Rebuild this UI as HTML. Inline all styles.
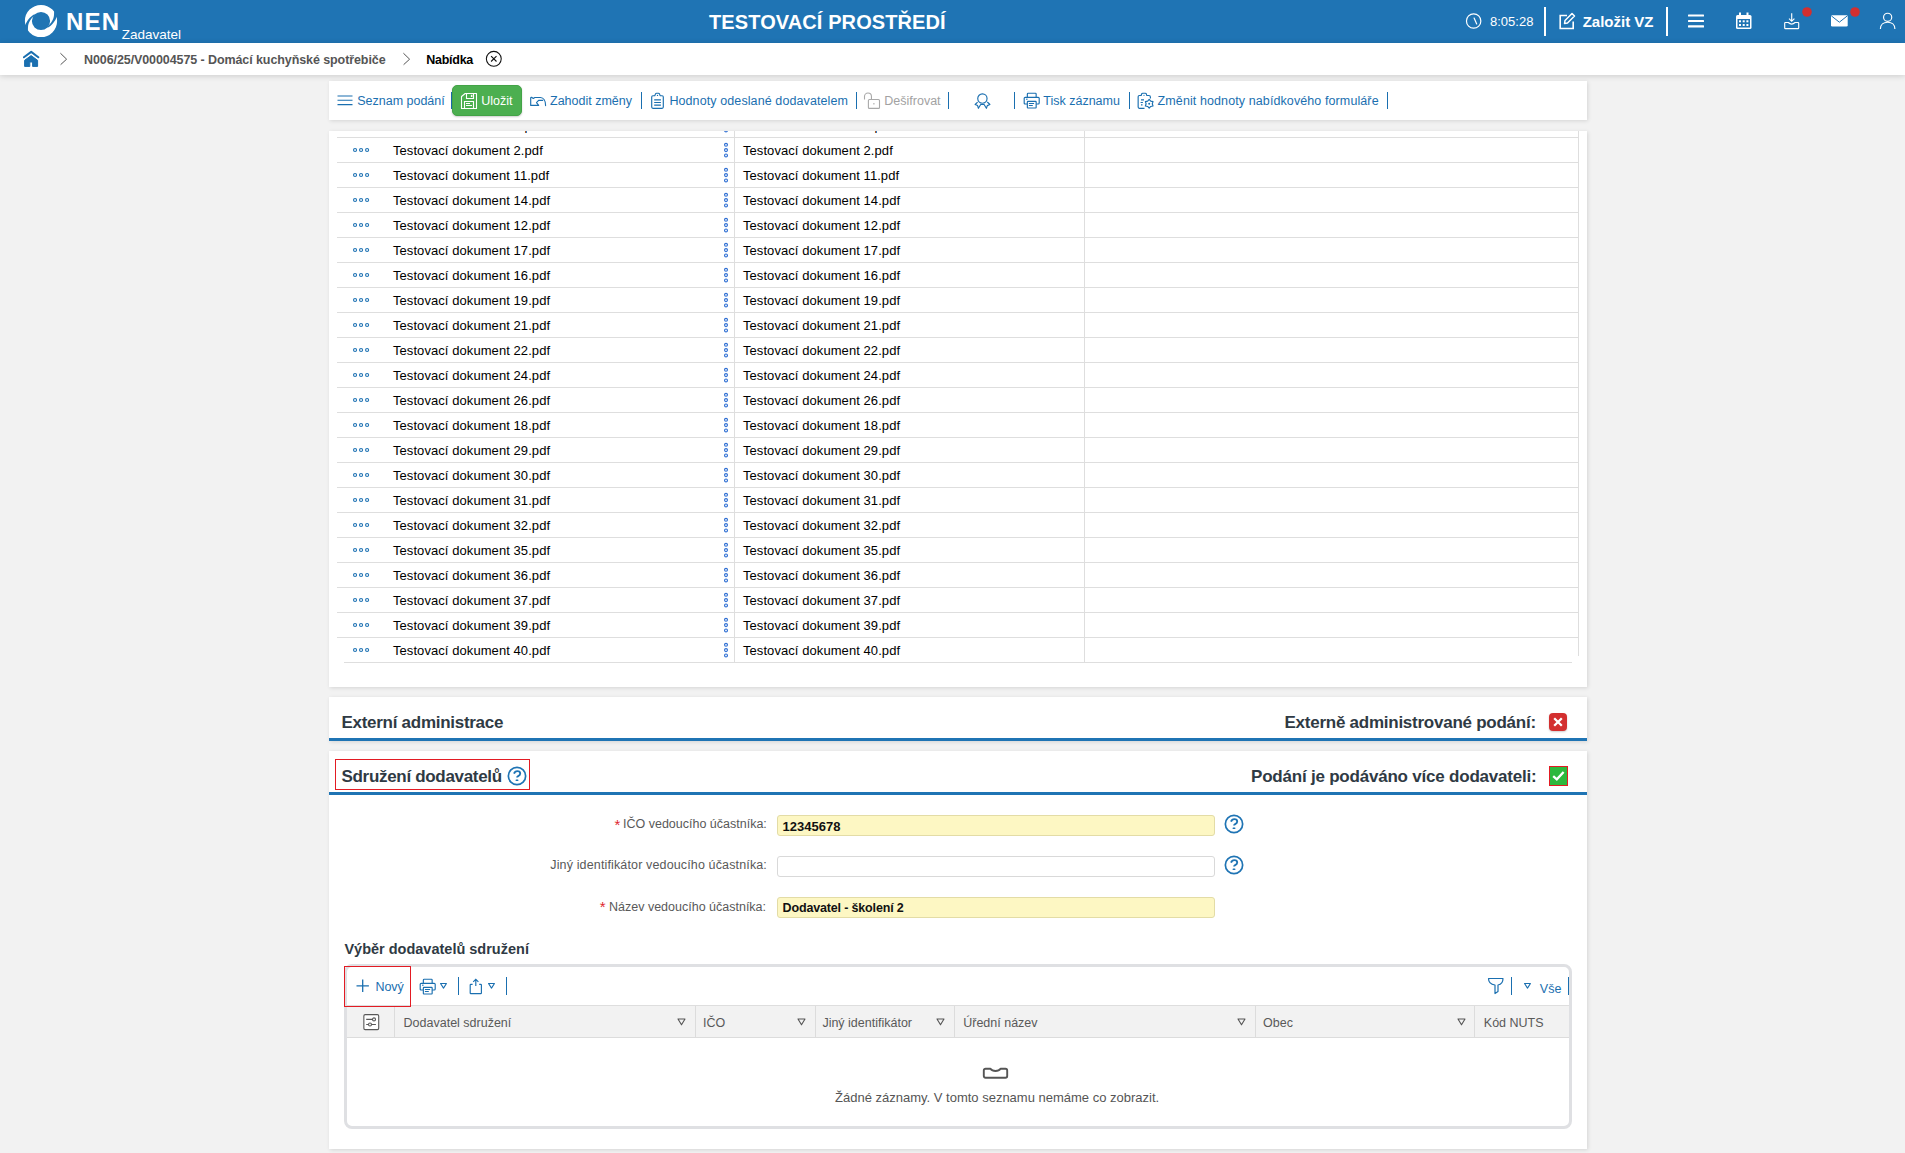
<!DOCTYPE html>
<html><head><meta charset="utf-8"><title>NEN</title>
<style>
html,body{margin:0;padding:0;}
body{width:1905px;height:1153px;overflow:hidden;position:relative;background:#f2f2f2;font-family:"Liberation Sans", sans-serif;}
.a{position:absolute;}
.t{position:absolute;line-height:1;white-space:nowrap;}
</style></head><body>
<div class="a" style="left:0px;top:0px;width:1905px;height:43px;background:#1f74b4;"></div>
<svg class="a" style="left:24px;top:4px;" width="34" height="34" viewBox="0 0 34 34"><circle cx="17" cy="17" r="12.6" fill="none" stroke="#fff" stroke-width="7"/><path d="M-0.5 22.5 L0.85 21.7 C2 19 4 14.5 9.05 10.9 L10.5 10.3 L10.5 11.8 C7 14 4.2 19 4.0 23 L3.8 28 L-0.5 28 Z" fill="#1f74b4"/><path d="M34.5 11.5 L33.15 12.3 C32 15 30 19.5 24.95 23.1 L23.5 23.7 L23.5 22.2 C27 20 29.8 15 30 11 L30.2 6 L34.5 6 Z" fill="#1f74b4"/></svg>
<div class="t" style="left:66px;top:9.78px;font-size:24px;color:#fff;font-weight:bold;letter-spacing:1.2px;">NEN</div>
<div class="t" style="left:121.8px;top:28.17px;font-size:13.5px;color:#fff;">Zadavatel</div>
<div class="t" style="left:709px;top:12.17px;font-size:20px;color:#fff;font-weight:bold;letter-spacing:0.1px;">TESTOVACÍ PROSTŘEDÍ</div>
<svg class="a" style="left:1465px;top:13px;" width="17" height="17" viewBox="0 0 17 17"><circle cx="8.65" cy="8" r="7.2" fill="none" stroke="#fff" stroke-width="1.2"/><path d="M9.1 5 L11.7 11" fill="none" stroke="#fff" stroke-width="1.2" stroke-linecap="round"/></svg>
<div class="t" style="left:1490px;top:14.50px;font-size:13px;color:#fff;">8:05:28</div>
<div class="a" style="left:1544px;top:7px;width:2px;height:29px;background:#fff;"></div>
<svg class="a" style="left:1558px;top:12px;" width="18" height="18" viewBox="0 0 18 18"><path d="M9 3.5 H2.2 V16.5 H15.2 V9.5" fill="none" stroke="#fff" stroke-width="1.6"/><path d="M6.5 11.5 L7 8.5 L14 1.5 L16.5 4 L9.5 11 Z" fill="none" stroke="#fff" stroke-width="1.5" stroke-linejoin="round"/></svg>
<div class="t" style="left:1582.7px;top:14.30px;font-size:15px;color:#fff;font-weight:bold;">Založit VZ</div>
<div class="a" style="left:1666px;top:7px;width:2px;height:29px;background:#fff;"></div>
<svg class="a" style="left:1688px;top:14px;" width="17" height="15" viewBox="0 0 17 15"><rect x="0" y="0.4" width="16" height="2.2" rx="0.5" fill="#fff"/><rect x="0" y="5.9" width="16" height="2.2" rx="0.5" fill="#fff"/><rect x="0" y="11.3" width="16" height="2.2" rx="0.5" fill="#fff"/></svg>
<svg class="a" style="left:1735px;top:12px;" width="18" height="18" viewBox="0 0 18 18"><rect x="1" y="3" width="15.5" height="14" rx="1.5" fill="#fff"/><rect x="2.5" y="7" width="12.5" height="8.5" fill="#1f74b4"/><g fill="#fff"><rect x="4" y="8.3" width="2" height="2"/><rect x="7.7" y="8.3" width="2" height="2"/><rect x="11.4" y="8.3" width="2" height="2"/><rect x="4" y="12" width="2" height="2"/><rect x="7.7" y="12" width="2" height="2"/><rect x="11.4" y="12" width="2" height="2"/></g><rect x="4" y="0.5" width="2" height="4" fill="#fff"/><rect x="11.5" y="0.5" width="2" height="4" fill="#fff"/></svg>
<svg class="a" style="left:1783px;top:12px;" width="18" height="18" viewBox="0 0 18 18"><path d="M1.7 11.2 Q1.7 10.5 2.4 10.5 H5.3 Q8.7 13.6 12.1 10.5 H15 Q15.7 10.5 15.7 11.2 V15.9 Q15.7 16.6 15 16.6 H2.4 Q1.7 16.6 1.7 15.9 Z" fill="none" stroke="#fff" stroke-width="1.15" stroke-linejoin="round"/><path d="M8.7 1.2 V9.3 M6 6.6 L8.7 9.3 L11.4 6.6" fill="none" stroke="#fff" stroke-width="1.15"/></svg>
<svg class="a" style="left:1802px;top:7px;" width="10" height="10" viewBox="0 0 10 10"><circle cx="5" cy="5" r="4.8" fill="#d32f2f"/></svg>
<svg class="a" style="left:1830px;top:14px;" width="19" height="14" viewBox="0 0 19 14"><rect x="1" y="1.3" width="16.7" height="11.2" rx="1.3" fill="#fff"/><path d="M1.4 1.9 L9.35 8.2 L17.3 1.9" fill="none" stroke="#1f74b4" stroke-width="1.0"/></svg>
<svg class="a" style="left:1850px;top:7px;" width="10" height="10" viewBox="0 0 10 10"><circle cx="5" cy="5" r="4.8" fill="#d32f2f"/></svg>
<svg class="a" style="left:1879px;top:12px;" width="17" height="18" viewBox="0 0 17 18"><circle cx="8.65" cy="5.3" r="4.1" fill="none" stroke="#fff" stroke-width="1.15"/><path d="M1.4 17 C1.4 12.6 4.5 10.2 8.65 10.2 C12.8 10.2 15.9 12.6 15.9 17" fill="none" stroke="#fff" stroke-width="1.15"/></svg>
<div class="a" style="left:0px;top:43px;width:1905px;height:32px;background:#fff;box-shadow:0 1px 6px rgba(0,0,0,0.16);"></div>
<svg class="a" style="left:23px;top:50px;" width="17" height="18" viewBox="0 0 17 18"><path d="M0.9 7.3 L8.2 1.9 L15.3 7.3" fill="none" stroke="#1a6fb0" stroke-width="2" stroke-linecap="round" stroke-linejoin="round"/><path d="M8.1 5.6 L14.6 10.3 V16.4 H9.6 V12 H6.8 V16.4 H1.6 V10.3 Z" fill="#1a6fb0" stroke="#1a6fb0" stroke-width="1" stroke-linejoin="round"/></svg>
<svg class="a" style="left:59px;top:52px;" width="9" height="14" viewBox="0 0 9 14"><path d="M1.4 1.2 L7.6 7.2 L1.6 12.7" fill="none" stroke="#555" stroke-width="1.0"/></svg>
<div class="t" style="left:84px;top:53.92px;font-size:12.5px;color:#555;font-weight:bold;letter-spacing:-0.09px;">N006/25/V00004575 - Domácí kuchyňské spotřebiče</div>
<svg class="a" style="left:402px;top:52px;" width="9" height="14" viewBox="0 0 9 14"><path d="M1.4 1.2 L7.6 7.2 L1.6 12.7" fill="none" stroke="#555" stroke-width="1.0"/></svg>
<div class="t" style="left:426.2px;top:53.92px;font-size:12.5px;color:#000;font-weight:bold;letter-spacing:-0.25px;">Nabídka</div>
<svg class="a" style="left:485px;top:50px;" width="18" height="18" viewBox="0 0 18 18"><circle cx="8.8" cy="8.8" r="7.45" fill="none" stroke="#111" stroke-width="1.05"/><path d="M6.1 6.1 L11.5 11.5 M11.5 6.1 L6.1 11.5" stroke="#111" stroke-width="1.1"/></svg>
<div class="a" style="left:329px;top:81px;width:1258px;height:39px;background:#fff;box-shadow:1px 1px 4px rgba(0,0,0,0.12);"></div>
<svg class="a" style="left:337px;top:95px;" width="16" height="11" viewBox="0 0 16 11"><g stroke="#1a6fb0" stroke-width="1.1"><path d="M0.5 1 H15.5 M0.5 5.3 H15.5 M0.5 9.6 H15.5"/></g></svg>
<div class="t" style="left:357.2px;top:94.92px;font-size:12.5px;color:#1a6fb0;">Seznam podání</div>
<div class="a" style="left:451px;top:92px;width:1.2px;height:17px;background:#1a6fb0;"></div>
<div class="a" style="left:452px;top:85px;width:70px;height:31px;background:#4caf50;border:1px solid #43a347;box-sizing:border-box;border-radius:5px;box-shadow:0 1px 2px rgba(0,0,0,0.2);"></div>
<svg class="a" style="left:460px;top:92px;" width="18" height="18" viewBox="0 0 18 18"><path d="M1.5 4.5 L5.2 1.5 H16.5 V16.5 H1.5 Z" fill="none" stroke="#fff" stroke-width="1.1" stroke-linejoin="round"/><path d="M6.5 1.5 V6.5 H13.5 V1.5" fill="none" stroke="#fff" stroke-width="1.1"/><rect x="10.9" y="2.8" width="1.5" height="2.2" fill="#fff"/><path d="M4.5 16.5 V9.5 H13.5 V16.5" fill="none" stroke="#fff" stroke-width="1.1"/><path d="M6 11.5 H10 M6 13.5 H12" stroke="#fff" stroke-width="1"/></svg>
<div class="t" style="left:481.3px;top:94.92px;font-size:12.5px;color:#fff;">Uložit</div>
<svg class="a" style="left:529px;top:95px;" width="18" height="12" viewBox="0 0 18 12"><path d="M1.7 10.3 V3.2 Q1.7 2.2 2.6 2.3 L4.3 3.4 L5.8 2.5 H11.4 C14.6 2.5 16.6 6 16.6 10.6" fill="none" stroke="#1a6fb0" stroke-width="1.15" stroke-linejoin="round" stroke-linecap="round"/><path d="M1.7 10.3 H9.7 L7.5 7.6 L9.6 5.4 H14.2" fill="none" stroke="#1a6fb0" stroke-width="1.15" stroke-linejoin="round"/></svg>
<div class="t" style="left:550px;top:94.92px;font-size:12.5px;color:#1a6fb0;">Zahodit změny</div>
<div class="a" style="left:640.5px;top:92px;width:1.2px;height:17px;background:#1a6fb0;"></div>
<svg class="a" style="left:650px;top:92px;" width="15" height="18" viewBox="0 0 15 18"><path d="M4.8 3.7 H2.9 Q1.7 3.7 1.7 4.9 V15.1 Q1.7 16.3 2.9 16.3 H12.1 Q13.3 16.3 13.3 15.1 V4.9 Q13.3 3.7 12.1 3.7 H10.1 L9.6 2.1 Q9.3 1.2 8.4 1.2 H6.6 Q5.7 1.2 5.4 2.1 Z" fill="none" stroke="#1a6fb0" stroke-width="1.15" stroke-linejoin="round"/><circle cx="7.5" cy="3.4" r="0.7" fill="#1a6fb0"/><path d="M4.2 7.9 H10.9 M4.2 10.5 H10.9 M4.2 13.1 H10.9" stroke="#1a6fb0" stroke-width="1.1"/></svg>
<div class="t" style="left:669.4px;top:94.92px;font-size:12.5px;color:#1a6fb0;letter-spacing:0.1px;">Hodnoty odeslané dodavatelem</div>
<div class="a" style="left:855.5px;top:92px;width:1.2px;height:17px;background:#1a6fb0;"></div>
<svg class="a" style="left:863px;top:92px;" width="18" height="18" viewBox="0 0 18 18"><path d="M1.5 7.5 V4.5 A3.47 3.47 0 0 1 8.45 4.5 V7.45" fill="none" stroke="#a9a9a9" stroke-width="1.1"/><rect x="5.4" y="7.45" width="11.1" height="8.95" rx="1" fill="none" stroke="#a9a9a9" stroke-width="1.1"/><path d="M10.9 11 V12.5" stroke="#a9a9a9" stroke-width="1.1"/></svg>
<div class="t" style="left:884.3px;top:94.92px;font-size:12.5px;color:#a2a2a2;">Dešifrovat</div>
<div class="a" style="left:948px;top:92px;width:1.2px;height:17px;background:#1a6fb0;"></div>
<svg class="a" style="left:974px;top:92px;" width="17" height="18" viewBox="0 0 17 18"><circle cx="8.4" cy="6.55" r="4.65" fill="none" stroke="#1a6fb0" stroke-width="1.15"/><path d="M3.6 10.1 L1.15 12.5 L3.6 13.6 L4.4 16.3 L6.7 12.5 H10.1 L12.4 16.3 L13.3 13.6 L15.9 12.5 L13.3 10" fill="none" stroke="#1a6fb0" stroke-width="1.15" stroke-linejoin="round"/></svg>
<div class="a" style="left:1014px;top:92px;width:1.2px;height:17px;background:#1a6fb0;"></div>
<svg class="a" style="left:1022.8px;top:92.25px;" width="18" height="18" viewBox="0 0 18 18"><g transform="translate(0.6 0.6)" fill="none" stroke="#1a6fb0" stroke-width="1.15"><path d="M3.75 4.3 V1.4 Q3.75 0.6 4.55 0.6 H11.75 Q12.55 0.6 12.55 1.4 V4.3"/><path d="M3.75 11.4 H1.6 Q0.6 11.4 0.6 10.4 V5.7 Q0.6 4.7 1.6 4.7 H14.6 Q15.6 4.7 15.6 5.7 V10.4 Q15.6 11.4 14.6 11.4 H12.55"/><rect x="3.75" y="8.8" width="8.8" height="6.6" rx="0.5"/><path d="M5.3 10.9 H10.5 M5.3 12.9 H9.2 M2.4 6.6 H4" stroke-width="1"/></g></svg>
<div class="t" style="left:1043.3px;top:94.92px;font-size:12.5px;color:#1a6fb0;">Tisk záznamu</div>
<div class="a" style="left:1128.5px;top:92px;width:1.2px;height:17px;background:#1a6fb0;"></div>
<svg class="a" style="left:1136px;top:92px;" width="19" height="18" viewBox="0 0 19 18"><path d="M8.5 16.3 H3.3 Q2.15 16.3 2.15 15.1 V4.7 Q2.15 3.5 3.3 3.5 H5.2 L5.6 2 Q5.9 1.2 6.8 1.2 H9.2 Q10.1 1.2 10.4 2 L10.7 3.5 H12.9 Q14.4 3.5 14.4 5 V6.6" fill="none" stroke="#1a6fb0" stroke-width="1.15" stroke-linejoin="round"/><circle cx="8" cy="3.3" r="0.6" fill="#1a6fb0"/><path d="M5 7.9 H8 M4.6 10.5 H6.9 M5 12.9 H6.5" stroke="#1a6fb0" stroke-width="1.1"/><path d="M13.20 7.40 L14.75 9.12 L17.01 9.60 L16.30 11.80 L17.01 14.00 L14.75 14.48 L13.20 16.20 L11.65 14.48 L9.39 14.00 L10.10 11.80 L9.39 9.60 L11.65 9.12 Z" fill="none" stroke="#1a6fb0" stroke-width="1.15" stroke-linejoin="round"/><circle cx="13.2" cy="11.8" r="1" fill="#1a6fb0"/></svg>
<div class="t" style="left:1157.6px;top:94.92px;font-size:12.5px;color:#1a6fb0;letter-spacing:0.1px;">Změnit hodnoty nabídkového formuláře</div>
<div class="a" style="left:1386.5px;top:92px;width:1.2px;height:17px;background:#1a6fb0;"></div>
<div class="a" style="left:329px;top:131px;width:1258px;height:556px;background:#fff;box-shadow:1px 1px 4px rgba(0,0,0,0.12);"></div>
<div class="a" style="left:329px;top:131px;width:1258px;height:556px;overflow:hidden;">
<div class="a" style="left:8px;top:6px;width:1241px;height:1px;background:#dedede;"></div>
<svg class="a" style="left:22px;top:-10px;" width="20" height="8" viewBox="0 0 20 8"><g fill="none" stroke="#1f73b4" stroke-width="1.15"><circle cx="4.05" cy="4" r="1.5"/><circle cx="10.05" cy="4" r="1.5"/><circle cx="16.1" cy="4" r="1.5"/></g></svg>
<svg class="a" style="left:393px;top:-16px;" width="8" height="20" viewBox="0 0 8 20"><g fill="none" stroke="#2f6fd3" stroke-width="1.15"><circle cx="4" cy="4.8" r="1.45"/><circle cx="4" cy="10.1" r="1.45"/><circle cx="4" cy="15.4" r="1.45"/></g></svg>
<div class="t" style="left:64px;top:-12.10px;font-size:13px;color:#000;letter-spacing:0.07px;">Testovací dokument 1.pdf</div>
<div class="t" style="left:414px;top:-12.10px;font-size:13px;color:#000;letter-spacing:0.07px;">Testovací dokument 1.pdf</div>
<div class="a" style="left:8px;top:31px;width:1241px;height:1px;background:#dedede;"></div>
<svg class="a" style="left:22px;top:15px;" width="20" height="8" viewBox="0 0 20 8"><g fill="none" stroke="#1f73b4" stroke-width="1.15"><circle cx="4.05" cy="4" r="1.5"/><circle cx="10.05" cy="4" r="1.5"/><circle cx="16.1" cy="4" r="1.5"/></g></svg>
<svg class="a" style="left:393px;top:9px;" width="8" height="20" viewBox="0 0 8 20"><g fill="none" stroke="#2f6fd3" stroke-width="1.15"><circle cx="4" cy="4.8" r="1.45"/><circle cx="4" cy="10.1" r="1.45"/><circle cx="4" cy="15.4" r="1.45"/></g></svg>
<div class="t" style="left:64px;top:12.90px;font-size:13px;color:#000;letter-spacing:0.07px;">Testovací dokument 2.pdf</div>
<div class="t" style="left:414px;top:12.90px;font-size:13px;color:#000;letter-spacing:0.07px;">Testovací dokument 2.pdf</div>
<div class="a" style="left:8px;top:56px;width:1241px;height:1px;background:#dedede;"></div>
<svg class="a" style="left:22px;top:40px;" width="20" height="8" viewBox="0 0 20 8"><g fill="none" stroke="#1f73b4" stroke-width="1.15"><circle cx="4.05" cy="4" r="1.5"/><circle cx="10.05" cy="4" r="1.5"/><circle cx="16.1" cy="4" r="1.5"/></g></svg>
<svg class="a" style="left:393px;top:34px;" width="8" height="20" viewBox="0 0 8 20"><g fill="none" stroke="#2f6fd3" stroke-width="1.15"><circle cx="4" cy="4.8" r="1.45"/><circle cx="4" cy="10.1" r="1.45"/><circle cx="4" cy="15.4" r="1.45"/></g></svg>
<div class="t" style="left:64px;top:37.90px;font-size:13px;color:#000;letter-spacing:0.07px;">Testovací dokument 11.pdf</div>
<div class="t" style="left:414px;top:37.90px;font-size:13px;color:#000;letter-spacing:0.07px;">Testovací dokument 11.pdf</div>
<div class="a" style="left:8px;top:81px;width:1241px;height:1px;background:#dedede;"></div>
<svg class="a" style="left:22px;top:65px;" width="20" height="8" viewBox="0 0 20 8"><g fill="none" stroke="#1f73b4" stroke-width="1.15"><circle cx="4.05" cy="4" r="1.5"/><circle cx="10.05" cy="4" r="1.5"/><circle cx="16.1" cy="4" r="1.5"/></g></svg>
<svg class="a" style="left:393px;top:59px;" width="8" height="20" viewBox="0 0 8 20"><g fill="none" stroke="#2f6fd3" stroke-width="1.15"><circle cx="4" cy="4.8" r="1.45"/><circle cx="4" cy="10.1" r="1.45"/><circle cx="4" cy="15.4" r="1.45"/></g></svg>
<div class="t" style="left:64px;top:62.90px;font-size:13px;color:#000;letter-spacing:0.07px;">Testovací dokument 14.pdf</div>
<div class="t" style="left:414px;top:62.90px;font-size:13px;color:#000;letter-spacing:0.07px;">Testovací dokument 14.pdf</div>
<div class="a" style="left:8px;top:106px;width:1241px;height:1px;background:#dedede;"></div>
<svg class="a" style="left:22px;top:90px;" width="20" height="8" viewBox="0 0 20 8"><g fill="none" stroke="#1f73b4" stroke-width="1.15"><circle cx="4.05" cy="4" r="1.5"/><circle cx="10.05" cy="4" r="1.5"/><circle cx="16.1" cy="4" r="1.5"/></g></svg>
<svg class="a" style="left:393px;top:84px;" width="8" height="20" viewBox="0 0 8 20"><g fill="none" stroke="#2f6fd3" stroke-width="1.15"><circle cx="4" cy="4.8" r="1.45"/><circle cx="4" cy="10.1" r="1.45"/><circle cx="4" cy="15.4" r="1.45"/></g></svg>
<div class="t" style="left:64px;top:87.90px;font-size:13px;color:#000;letter-spacing:0.07px;">Testovací dokument 12.pdf</div>
<div class="t" style="left:414px;top:87.90px;font-size:13px;color:#000;letter-spacing:0.07px;">Testovací dokument 12.pdf</div>
<div class="a" style="left:8px;top:131px;width:1241px;height:1px;background:#dedede;"></div>
<svg class="a" style="left:22px;top:115px;" width="20" height="8" viewBox="0 0 20 8"><g fill="none" stroke="#1f73b4" stroke-width="1.15"><circle cx="4.05" cy="4" r="1.5"/><circle cx="10.05" cy="4" r="1.5"/><circle cx="16.1" cy="4" r="1.5"/></g></svg>
<svg class="a" style="left:393px;top:109px;" width="8" height="20" viewBox="0 0 8 20"><g fill="none" stroke="#2f6fd3" stroke-width="1.15"><circle cx="4" cy="4.8" r="1.45"/><circle cx="4" cy="10.1" r="1.45"/><circle cx="4" cy="15.4" r="1.45"/></g></svg>
<div class="t" style="left:64px;top:112.90px;font-size:13px;color:#000;letter-spacing:0.07px;">Testovací dokument 17.pdf</div>
<div class="t" style="left:414px;top:112.90px;font-size:13px;color:#000;letter-spacing:0.07px;">Testovací dokument 17.pdf</div>
<div class="a" style="left:8px;top:156px;width:1241px;height:1px;background:#dedede;"></div>
<svg class="a" style="left:22px;top:140px;" width="20" height="8" viewBox="0 0 20 8"><g fill="none" stroke="#1f73b4" stroke-width="1.15"><circle cx="4.05" cy="4" r="1.5"/><circle cx="10.05" cy="4" r="1.5"/><circle cx="16.1" cy="4" r="1.5"/></g></svg>
<svg class="a" style="left:393px;top:134px;" width="8" height="20" viewBox="0 0 8 20"><g fill="none" stroke="#2f6fd3" stroke-width="1.15"><circle cx="4" cy="4.8" r="1.45"/><circle cx="4" cy="10.1" r="1.45"/><circle cx="4" cy="15.4" r="1.45"/></g></svg>
<div class="t" style="left:64px;top:137.90px;font-size:13px;color:#000;letter-spacing:0.07px;">Testovací dokument 16.pdf</div>
<div class="t" style="left:414px;top:137.90px;font-size:13px;color:#000;letter-spacing:0.07px;">Testovací dokument 16.pdf</div>
<div class="a" style="left:8px;top:181px;width:1241px;height:1px;background:#dedede;"></div>
<svg class="a" style="left:22px;top:165px;" width="20" height="8" viewBox="0 0 20 8"><g fill="none" stroke="#1f73b4" stroke-width="1.15"><circle cx="4.05" cy="4" r="1.5"/><circle cx="10.05" cy="4" r="1.5"/><circle cx="16.1" cy="4" r="1.5"/></g></svg>
<svg class="a" style="left:393px;top:159px;" width="8" height="20" viewBox="0 0 8 20"><g fill="none" stroke="#2f6fd3" stroke-width="1.15"><circle cx="4" cy="4.8" r="1.45"/><circle cx="4" cy="10.1" r="1.45"/><circle cx="4" cy="15.4" r="1.45"/></g></svg>
<div class="t" style="left:64px;top:162.90px;font-size:13px;color:#000;letter-spacing:0.07px;">Testovací dokument 19.pdf</div>
<div class="t" style="left:414px;top:162.90px;font-size:13px;color:#000;letter-spacing:0.07px;">Testovací dokument 19.pdf</div>
<div class="a" style="left:8px;top:206px;width:1241px;height:1px;background:#dedede;"></div>
<svg class="a" style="left:22px;top:190px;" width="20" height="8" viewBox="0 0 20 8"><g fill="none" stroke="#1f73b4" stroke-width="1.15"><circle cx="4.05" cy="4" r="1.5"/><circle cx="10.05" cy="4" r="1.5"/><circle cx="16.1" cy="4" r="1.5"/></g></svg>
<svg class="a" style="left:393px;top:184px;" width="8" height="20" viewBox="0 0 8 20"><g fill="none" stroke="#2f6fd3" stroke-width="1.15"><circle cx="4" cy="4.8" r="1.45"/><circle cx="4" cy="10.1" r="1.45"/><circle cx="4" cy="15.4" r="1.45"/></g></svg>
<div class="t" style="left:64px;top:187.90px;font-size:13px;color:#000;letter-spacing:0.07px;">Testovací dokument 21.pdf</div>
<div class="t" style="left:414px;top:187.90px;font-size:13px;color:#000;letter-spacing:0.07px;">Testovací dokument 21.pdf</div>
<div class="a" style="left:8px;top:231px;width:1241px;height:1px;background:#dedede;"></div>
<svg class="a" style="left:22px;top:215px;" width="20" height="8" viewBox="0 0 20 8"><g fill="none" stroke="#1f73b4" stroke-width="1.15"><circle cx="4.05" cy="4" r="1.5"/><circle cx="10.05" cy="4" r="1.5"/><circle cx="16.1" cy="4" r="1.5"/></g></svg>
<svg class="a" style="left:393px;top:209px;" width="8" height="20" viewBox="0 0 8 20"><g fill="none" stroke="#2f6fd3" stroke-width="1.15"><circle cx="4" cy="4.8" r="1.45"/><circle cx="4" cy="10.1" r="1.45"/><circle cx="4" cy="15.4" r="1.45"/></g></svg>
<div class="t" style="left:64px;top:212.90px;font-size:13px;color:#000;letter-spacing:0.07px;">Testovací dokument 22.pdf</div>
<div class="t" style="left:414px;top:212.90px;font-size:13px;color:#000;letter-spacing:0.07px;">Testovací dokument 22.pdf</div>
<div class="a" style="left:8px;top:256px;width:1241px;height:1px;background:#dedede;"></div>
<svg class="a" style="left:22px;top:240px;" width="20" height="8" viewBox="0 0 20 8"><g fill="none" stroke="#1f73b4" stroke-width="1.15"><circle cx="4.05" cy="4" r="1.5"/><circle cx="10.05" cy="4" r="1.5"/><circle cx="16.1" cy="4" r="1.5"/></g></svg>
<svg class="a" style="left:393px;top:234px;" width="8" height="20" viewBox="0 0 8 20"><g fill="none" stroke="#2f6fd3" stroke-width="1.15"><circle cx="4" cy="4.8" r="1.45"/><circle cx="4" cy="10.1" r="1.45"/><circle cx="4" cy="15.4" r="1.45"/></g></svg>
<div class="t" style="left:64px;top:237.90px;font-size:13px;color:#000;letter-spacing:0.07px;">Testovací dokument 24.pdf</div>
<div class="t" style="left:414px;top:237.90px;font-size:13px;color:#000;letter-spacing:0.07px;">Testovací dokument 24.pdf</div>
<div class="a" style="left:8px;top:281px;width:1241px;height:1px;background:#dedede;"></div>
<svg class="a" style="left:22px;top:265px;" width="20" height="8" viewBox="0 0 20 8"><g fill="none" stroke="#1f73b4" stroke-width="1.15"><circle cx="4.05" cy="4" r="1.5"/><circle cx="10.05" cy="4" r="1.5"/><circle cx="16.1" cy="4" r="1.5"/></g></svg>
<svg class="a" style="left:393px;top:259px;" width="8" height="20" viewBox="0 0 8 20"><g fill="none" stroke="#2f6fd3" stroke-width="1.15"><circle cx="4" cy="4.8" r="1.45"/><circle cx="4" cy="10.1" r="1.45"/><circle cx="4" cy="15.4" r="1.45"/></g></svg>
<div class="t" style="left:64px;top:262.90px;font-size:13px;color:#000;letter-spacing:0.07px;">Testovací dokument 26.pdf</div>
<div class="t" style="left:414px;top:262.90px;font-size:13px;color:#000;letter-spacing:0.07px;">Testovací dokument 26.pdf</div>
<div class="a" style="left:8px;top:306px;width:1241px;height:1px;background:#dedede;"></div>
<svg class="a" style="left:22px;top:290px;" width="20" height="8" viewBox="0 0 20 8"><g fill="none" stroke="#1f73b4" stroke-width="1.15"><circle cx="4.05" cy="4" r="1.5"/><circle cx="10.05" cy="4" r="1.5"/><circle cx="16.1" cy="4" r="1.5"/></g></svg>
<svg class="a" style="left:393px;top:284px;" width="8" height="20" viewBox="0 0 8 20"><g fill="none" stroke="#2f6fd3" stroke-width="1.15"><circle cx="4" cy="4.8" r="1.45"/><circle cx="4" cy="10.1" r="1.45"/><circle cx="4" cy="15.4" r="1.45"/></g></svg>
<div class="t" style="left:64px;top:287.90px;font-size:13px;color:#000;letter-spacing:0.07px;">Testovací dokument 18.pdf</div>
<div class="t" style="left:414px;top:287.90px;font-size:13px;color:#000;letter-spacing:0.07px;">Testovací dokument 18.pdf</div>
<div class="a" style="left:8px;top:331px;width:1241px;height:1px;background:#dedede;"></div>
<svg class="a" style="left:22px;top:315px;" width="20" height="8" viewBox="0 0 20 8"><g fill="none" stroke="#1f73b4" stroke-width="1.15"><circle cx="4.05" cy="4" r="1.5"/><circle cx="10.05" cy="4" r="1.5"/><circle cx="16.1" cy="4" r="1.5"/></g></svg>
<svg class="a" style="left:393px;top:309px;" width="8" height="20" viewBox="0 0 8 20"><g fill="none" stroke="#2f6fd3" stroke-width="1.15"><circle cx="4" cy="4.8" r="1.45"/><circle cx="4" cy="10.1" r="1.45"/><circle cx="4" cy="15.4" r="1.45"/></g></svg>
<div class="t" style="left:64px;top:312.90px;font-size:13px;color:#000;letter-spacing:0.07px;">Testovací dokument 29.pdf</div>
<div class="t" style="left:414px;top:312.90px;font-size:13px;color:#000;letter-spacing:0.07px;">Testovací dokument 29.pdf</div>
<div class="a" style="left:8px;top:356px;width:1241px;height:1px;background:#dedede;"></div>
<svg class="a" style="left:22px;top:340px;" width="20" height="8" viewBox="0 0 20 8"><g fill="none" stroke="#1f73b4" stroke-width="1.15"><circle cx="4.05" cy="4" r="1.5"/><circle cx="10.05" cy="4" r="1.5"/><circle cx="16.1" cy="4" r="1.5"/></g></svg>
<svg class="a" style="left:393px;top:334px;" width="8" height="20" viewBox="0 0 8 20"><g fill="none" stroke="#2f6fd3" stroke-width="1.15"><circle cx="4" cy="4.8" r="1.45"/><circle cx="4" cy="10.1" r="1.45"/><circle cx="4" cy="15.4" r="1.45"/></g></svg>
<div class="t" style="left:64px;top:337.90px;font-size:13px;color:#000;letter-spacing:0.07px;">Testovací dokument 30.pdf</div>
<div class="t" style="left:414px;top:337.90px;font-size:13px;color:#000;letter-spacing:0.07px;">Testovací dokument 30.pdf</div>
<div class="a" style="left:8px;top:381px;width:1241px;height:1px;background:#dedede;"></div>
<svg class="a" style="left:22px;top:365px;" width="20" height="8" viewBox="0 0 20 8"><g fill="none" stroke="#1f73b4" stroke-width="1.15"><circle cx="4.05" cy="4" r="1.5"/><circle cx="10.05" cy="4" r="1.5"/><circle cx="16.1" cy="4" r="1.5"/></g></svg>
<svg class="a" style="left:393px;top:359px;" width="8" height="20" viewBox="0 0 8 20"><g fill="none" stroke="#2f6fd3" stroke-width="1.15"><circle cx="4" cy="4.8" r="1.45"/><circle cx="4" cy="10.1" r="1.45"/><circle cx="4" cy="15.4" r="1.45"/></g></svg>
<div class="t" style="left:64px;top:362.90px;font-size:13px;color:#000;letter-spacing:0.07px;">Testovací dokument 31.pdf</div>
<div class="t" style="left:414px;top:362.90px;font-size:13px;color:#000;letter-spacing:0.07px;">Testovací dokument 31.pdf</div>
<div class="a" style="left:8px;top:406px;width:1241px;height:1px;background:#dedede;"></div>
<svg class="a" style="left:22px;top:390px;" width="20" height="8" viewBox="0 0 20 8"><g fill="none" stroke="#1f73b4" stroke-width="1.15"><circle cx="4.05" cy="4" r="1.5"/><circle cx="10.05" cy="4" r="1.5"/><circle cx="16.1" cy="4" r="1.5"/></g></svg>
<svg class="a" style="left:393px;top:384px;" width="8" height="20" viewBox="0 0 8 20"><g fill="none" stroke="#2f6fd3" stroke-width="1.15"><circle cx="4" cy="4.8" r="1.45"/><circle cx="4" cy="10.1" r="1.45"/><circle cx="4" cy="15.4" r="1.45"/></g></svg>
<div class="t" style="left:64px;top:387.90px;font-size:13px;color:#000;letter-spacing:0.07px;">Testovací dokument 32.pdf</div>
<div class="t" style="left:414px;top:387.90px;font-size:13px;color:#000;letter-spacing:0.07px;">Testovací dokument 32.pdf</div>
<div class="a" style="left:8px;top:431px;width:1241px;height:1px;background:#dedede;"></div>
<svg class="a" style="left:22px;top:415px;" width="20" height="8" viewBox="0 0 20 8"><g fill="none" stroke="#1f73b4" stroke-width="1.15"><circle cx="4.05" cy="4" r="1.5"/><circle cx="10.05" cy="4" r="1.5"/><circle cx="16.1" cy="4" r="1.5"/></g></svg>
<svg class="a" style="left:393px;top:409px;" width="8" height="20" viewBox="0 0 8 20"><g fill="none" stroke="#2f6fd3" stroke-width="1.15"><circle cx="4" cy="4.8" r="1.45"/><circle cx="4" cy="10.1" r="1.45"/><circle cx="4" cy="15.4" r="1.45"/></g></svg>
<div class="t" style="left:64px;top:412.90px;font-size:13px;color:#000;letter-spacing:0.07px;">Testovací dokument 35.pdf</div>
<div class="t" style="left:414px;top:412.90px;font-size:13px;color:#000;letter-spacing:0.07px;">Testovací dokument 35.pdf</div>
<div class="a" style="left:8px;top:456px;width:1241px;height:1px;background:#dedede;"></div>
<svg class="a" style="left:22px;top:440px;" width="20" height="8" viewBox="0 0 20 8"><g fill="none" stroke="#1f73b4" stroke-width="1.15"><circle cx="4.05" cy="4" r="1.5"/><circle cx="10.05" cy="4" r="1.5"/><circle cx="16.1" cy="4" r="1.5"/></g></svg>
<svg class="a" style="left:393px;top:434px;" width="8" height="20" viewBox="0 0 8 20"><g fill="none" stroke="#2f6fd3" stroke-width="1.15"><circle cx="4" cy="4.8" r="1.45"/><circle cx="4" cy="10.1" r="1.45"/><circle cx="4" cy="15.4" r="1.45"/></g></svg>
<div class="t" style="left:64px;top:437.90px;font-size:13px;color:#000;letter-spacing:0.07px;">Testovací dokument 36.pdf</div>
<div class="t" style="left:414px;top:437.90px;font-size:13px;color:#000;letter-spacing:0.07px;">Testovací dokument 36.pdf</div>
<div class="a" style="left:8px;top:481px;width:1241px;height:1px;background:#dedede;"></div>
<svg class="a" style="left:22px;top:465px;" width="20" height="8" viewBox="0 0 20 8"><g fill="none" stroke="#1f73b4" stroke-width="1.15"><circle cx="4.05" cy="4" r="1.5"/><circle cx="10.05" cy="4" r="1.5"/><circle cx="16.1" cy="4" r="1.5"/></g></svg>
<svg class="a" style="left:393px;top:459px;" width="8" height="20" viewBox="0 0 8 20"><g fill="none" stroke="#2f6fd3" stroke-width="1.15"><circle cx="4" cy="4.8" r="1.45"/><circle cx="4" cy="10.1" r="1.45"/><circle cx="4" cy="15.4" r="1.45"/></g></svg>
<div class="t" style="left:64px;top:462.90px;font-size:13px;color:#000;letter-spacing:0.07px;">Testovací dokument 37.pdf</div>
<div class="t" style="left:414px;top:462.90px;font-size:13px;color:#000;letter-spacing:0.07px;">Testovací dokument 37.pdf</div>
<div class="a" style="left:8px;top:506px;width:1241px;height:1px;background:#dedede;"></div>
<svg class="a" style="left:22px;top:490px;" width="20" height="8" viewBox="0 0 20 8"><g fill="none" stroke="#1f73b4" stroke-width="1.15"><circle cx="4.05" cy="4" r="1.5"/><circle cx="10.05" cy="4" r="1.5"/><circle cx="16.1" cy="4" r="1.5"/></g></svg>
<svg class="a" style="left:393px;top:484px;" width="8" height="20" viewBox="0 0 8 20"><g fill="none" stroke="#2f6fd3" stroke-width="1.15"><circle cx="4" cy="4.8" r="1.45"/><circle cx="4" cy="10.1" r="1.45"/><circle cx="4" cy="15.4" r="1.45"/></g></svg>
<div class="t" style="left:64px;top:487.90px;font-size:13px;color:#000;letter-spacing:0.07px;">Testovací dokument 39.pdf</div>
<div class="t" style="left:414px;top:487.90px;font-size:13px;color:#000;letter-spacing:0.07px;">Testovací dokument 39.pdf</div>
<div class="a" style="left:15px;top:531px;width:1228px;height:1px;background:#dedede;"></div>
<svg class="a" style="left:22px;top:515px;" width="20" height="8" viewBox="0 0 20 8"><g fill="none" stroke="#1f73b4" stroke-width="1.15"><circle cx="4.05" cy="4" r="1.5"/><circle cx="10.05" cy="4" r="1.5"/><circle cx="16.1" cy="4" r="1.5"/></g></svg>
<svg class="a" style="left:393px;top:509px;" width="8" height="20" viewBox="0 0 8 20"><g fill="none" stroke="#2f6fd3" stroke-width="1.15"><circle cx="4" cy="4.8" r="1.45"/><circle cx="4" cy="10.1" r="1.45"/><circle cx="4" cy="15.4" r="1.45"/></g></svg>
<div class="t" style="left:64px;top:512.90px;font-size:13px;color:#000;letter-spacing:0.07px;">Testovací dokument 40.pdf</div>
<div class="t" style="left:414px;top:512.90px;font-size:13px;color:#000;letter-spacing:0.07px;">Testovací dokument 40.pdf</div>
<div class="a" style="left:405px;top:0px;width:1px;height:531px;background:#dedede;"></div>
<div class="a" style="left:755px;top:0px;width:1px;height:531px;background:#dedede;"></div>
<div class="a" style="left:1249px;top:0px;width:1px;height:525px;background:#dedede;"></div>
</div>
<div class="a" style="left:329px;top:697px;width:1258px;height:41px;background:#fff;border-bottom:3px solid #1f74b4;box-shadow:1px 1px 4px rgba(0,0,0,0.12);"></div>
<div class="t" style="left:341.5px;top:714.01px;font-size:17px;color:#2f3a44;font-weight:bold;letter-spacing:-0.28px;">Externí administrace</div>
<div class="t" style="left:1284.5px;top:714.01px;font-size:17px;color:#2f3a44;font-weight:bold;letter-spacing:-0.25px;">Externě administrované podání:</div>
<div class="a" style="left:1549px;top:713px;width:18px;height:18px;background:#d32f2f;border-radius:4px;box-shadow:0 1px 2px rgba(0,0,0,0.2);"></div>
<svg class="a" style="left:1549px;top:713px;" width="18" height="18" viewBox="0 0 18 18"><path d="M5.2 5.3 L12.8 12.7 M12.8 5.3 L5.2 12.7" stroke="#fff" stroke-width="2.3"/></svg>
<div class="a" style="left:329px;top:751px;width:1258px;height:398px;background:#fff;box-shadow:1px 1px 4px rgba(0,0,0,0.12);"></div>
<div class="a" style="left:329px;top:792px;width:1258px;height:3px;background:#1f74b4;"></div>
<div class="a" style="left:335px;top:759px;width:194.5px;height:30.5px;border:1.3px solid #e31b23;box-sizing:border-box;"></div>
<div class="t" style="left:341.5px;top:768.01px;font-size:17px;color:#2f3a44;font-weight:bold;letter-spacing:-0.31px;">Sdružení dodavatelů</div>
<svg class="a" style="left:505.6px;top:765.0px;" width="22" height="22" viewBox="0 0 22 22"><circle cx="11.0" cy="11.0" r="8.65" fill="none" stroke="#1f74b4" stroke-width="1.7"/><path d="M8.0 8.7 Q9.0 6.1 11.3 6.1 Q14.2 6.1 14.2 8.5 Q14.2 10.1 12.2 11.1 Q11.1 11.7 11.1 12.6" fill="none" stroke="#1f74b4" stroke-width="1.9"/><rect x="9.6" y="14.6" width="2.8" height="1.5" rx="0.5" fill="#1f74b4"/></svg>
<div class="t" style="left:1251px;top:768.01px;font-size:17px;color:#2f3a44;font-weight:bold;letter-spacing:-0.21px;">Podání je podáváno více dodavateli:</div>
<div class="a" style="left:1549px;top:766px;width:19px;height:20px;background:#2db83d;border:1px solid #e31b23;box-sizing:border-box;"></div>
<svg class="a" style="left:1549px;top:766px;" width="19" height="20" viewBox="0 0 19 20"><path d="M4.2 10.2 L7.8 13.4 L14.6 6" fill="none" stroke="#fff" stroke-width="2.3"/></svg>
<div class="t" style="left:614.5px;top:816.50px;font-size:15px;color:#e0262e;">*</div>
<div class="t" style="left:623.0px;top:817.92px;font-size:12.5px;color:#595959;">IČO vedoucího účastníka:</div>
<div class="a" style="left:777px;top:815px;width:438px;height:21px;background:#fdf7c3;border:1px solid #e3dca6;border-radius:3px;box-sizing:border-box;"></div>
<div class="t" style="left:782.6px;top:820.00px;font-size:13px;color:#111;font-weight:bold;">12345678</div>
<svg class="a" style="left:1223.0px;top:813.1px;" width="22" height="22" viewBox="0 0 22 22"><circle cx="11.0" cy="11.0" r="8.65" fill="none" stroke="#1f74b4" stroke-width="1.7"/><path d="M8.0 8.7 Q9.0 6.1 11.3 6.1 Q14.2 6.1 14.2 8.5 Q14.2 10.1 12.2 11.1 Q11.1 11.7 11.1 12.6" fill="none" stroke="#1f74b4" stroke-width="1.9"/><rect x="9.6" y="14.6" width="2.8" height="1.5" rx="0.5" fill="#1f74b4"/></svg>
<div class="t" style="left:550.3px;top:859.22px;font-size:12.5px;color:#595959;letter-spacing:0.14px;">Jiný identifikátor vedoucího účastníka:</div>
<div class="a" style="left:777px;top:856px;width:438px;height:21px;background:#fff;border:1px solid #d9d9d9;border-radius:3px;box-sizing:border-box;"></div>
<svg class="a" style="left:1223.0px;top:854.2px;" width="22" height="22" viewBox="0 0 22 22"><circle cx="11.0" cy="11.0" r="8.65" fill="none" stroke="#1f74b4" stroke-width="1.7"/><path d="M8.0 8.7 Q9.0 6.1 11.3 6.1 Q14.2 6.1 14.2 8.5 Q14.2 10.1 12.2 11.1 Q11.1 11.7 11.1 12.6" fill="none" stroke="#1f74b4" stroke-width="1.9"/><rect x="9.6" y="14.6" width="2.8" height="1.5" rx="0.5" fill="#1f74b4"/></svg>
<div class="t" style="left:599.8px;top:899.10px;font-size:15px;color:#e0262e;">*</div>
<div class="t" style="left:609.0px;top:900.52px;font-size:12.5px;color:#595959;">Název vedoucího účastníka:</div>
<div class="a" style="left:777px;top:897px;width:438px;height:21px;background:#fdf7c3;border:1px solid #e3dca6;border-radius:3px;box-sizing:border-box;"></div>
<div class="t" style="left:782.6px;top:902.02px;font-size:12.5px;color:#111;font-weight:bold;letter-spacing:-0.16px;">Dodavatel - školení 2</div>
<div class="t" style="left:344.4px;top:942.13px;font-size:14.5px;color:#2f3a44;font-weight:bold;">Výběr dodavatelů sdružení</div>
<div class="a" style="left:344px;top:963.5px;width:1228px;height:165px;border:3px solid #dfe0e3;border-radius:8px;box-sizing:border-box;background:#fff;"></div>
<svg class="a" style="left:356px;top:979px;" width="14" height="14" viewBox="0 0 14 14"><path d="M6.7 0.6 V12.9 M0.5 6.8 H12.9" stroke="#1a6fb0" stroke-width="1.3"/></svg>
<div class="t" style="left:375.4px;top:981.02px;font-size:12.5px;color:#1a6fb0;">Nový</div>
<svg class="a" style="left:418.79999999999995px;top:977.5px;" width="18" height="18" viewBox="0 0 18 18"><g transform="translate(0.6 0.6)" fill="none" stroke="#1a6fb0" stroke-width="1.15"><path d="M3.75 4.3 V1.4 Q3.75 0.6 4.55 0.6 H11.75 Q12.55 0.6 12.55 1.4 V4.3"/><path d="M3.75 11.4 H1.6 Q0.6 11.4 0.6 10.4 V5.7 Q0.6 4.7 1.6 4.7 H14.6 Q15.6 4.7 15.6 5.7 V10.4 Q15.6 11.4 14.6 11.4 H12.55"/><rect x="3.75" y="8.8" width="8.8" height="6.6" rx="0.5"/><path d="M5.3 10.9 H10.5 M5.3 12.9 H9.2 M2.4 6.6 H4" stroke-width="1"/></g></svg>
<svg class="a" style="left:438.5px;top:982.3px;" width="9" height="8" viewBox="0 0 9 8"><path d="M1.55 1.55 H7.45 L4.5 6.1 Z" fill="none" stroke="#1a6fb0" stroke-width="1.1" stroke-linejoin="round"/></svg>
<div class="a" style="left:458px;top:977px;width:1.2px;height:18px;background:#1a6fb0;"></div>
<svg class="a" style="left:468.7px;top:977.5px;" width="14" height="18" viewBox="0 0 14 18"><g transform="translate(0.6 0.6)" fill="none" stroke="#1a6fb0" stroke-width="1.15"><path d="M3 5.75 H1.3 Q0.6 5.75 0.6 6.5 V14.3 Q0.6 15 1.3 15 H11.1 Q11.8 15 11.8 14.3 V6.5 Q11.8 5.75 11.1 5.75 H9.6"/><path d="M6.2 7.4 V0.9 M3.6 3.3 L6.2 0.7 L8.8 3.3"/></g></svg>
<svg class="a" style="left:486.5px;top:982.3px;" width="9" height="8" viewBox="0 0 9 8"><path d="M1.55 1.55 H7.45 L4.5 6.1 Z" fill="none" stroke="#1a6fb0" stroke-width="1.1" stroke-linejoin="round"/></svg>
<div class="a" style="left:506px;top:977px;width:1.2px;height:18px;background:#1a6fb0;"></div>
<svg class="a" style="left:1487px;top:977px;" width="18" height="18" viewBox="0 0 18 18"><path d="M1.5 1.5 H16 C16 5.5 13.5 7.5 11 8 V14.5 L8 16.5 V8 C4.5 7.5 1.5 5.5 1.5 1.5 Z" fill="none" stroke="#1a6fb0" stroke-width="1.2" stroke-linejoin="round"/></svg>
<div class="a" style="left:1511px;top:977px;width:1.2px;height:18px;background:#1a6fb0;"></div>
<svg class="a" style="left:1523px;top:982px;" width="9" height="8" viewBox="0 0 9 8"><path d="M1.55 1.55 H7.45 L4.5 6.1 Z" fill="none" stroke="#1a6fb0" stroke-width="1.1" stroke-linejoin="round"/></svg>
<div class="t" style="left:1539.8px;top:983.42px;font-size:12.5px;color:#1a6fb0;">Vše</div>
<div class="a" style="left:1568px;top:977px;width:1.2px;height:18px;background:#1a6fb0;"></div>
<div class="a" style="left:347px;top:1005px;width:1222px;height:33px;background:#f2f2f2;border-top:1px solid #dedede;border-bottom:1px solid #dcdcdc;box-sizing:border-box;"></div>
<div class="a" style="left:394.3px;top:1006px;width:1px;height:31px;background:#dcdcdc;"></div>
<div class="a" style="left:694.5px;top:1006px;width:1px;height:31px;background:#dcdcdc;"></div>
<div class="a" style="left:814.8px;top:1006px;width:1px;height:31px;background:#dcdcdc;"></div>
<div class="a" style="left:954.4px;top:1006px;width:1px;height:31px;background:#dcdcdc;"></div>
<div class="a" style="left:1254.6px;top:1006px;width:1px;height:31px;background:#dcdcdc;"></div>
<div class="a" style="left:1474.4px;top:1006px;width:1px;height:31px;background:#dcdcdc;"></div>
<svg class="a" style="left:362px;top:1013px;" width="18" height="18" viewBox="0 0 18 18"><rect x="1.85" y="1.65" width="14.85" height="14.95" rx="1.3" fill="#fff" stroke="#585858" stroke-width="1.1"/><path d="M4.2 6.4 H13.9 M4.2 11.5 H13.9" stroke="#585858" stroke-width="1.1"/><circle cx="12" cy="6.4" r="1.5" fill="#fff" stroke="#585858" stroke-width="1.1"/><circle cx="8" cy="11.5" r="1.5" fill="#fff" stroke="#585858" stroke-width="1.1"/></svg>
<div class="t" style="left:403.6px;top:1017.22px;font-size:12.5px;color:#595959;">Dodavatel sdružení</div>
<svg class="a" style="left:676.5px;top:1017.5px;" width="9" height="8" viewBox="0 0 9 8"><path d="M1 1 H8 L4.5 6.8 Z" fill="none" stroke="#555" stroke-width="1.1" stroke-linejoin="round"/></svg>
<div class="t" style="left:703px;top:1017.22px;font-size:12.5px;color:#595959;">IČO</div>
<svg class="a" style="left:796.5px;top:1017.5px;" width="9" height="8" viewBox="0 0 9 8"><path d="M1 1 H8 L4.5 6.8 Z" fill="none" stroke="#555" stroke-width="1.1" stroke-linejoin="round"/></svg>
<div class="t" style="left:822.4px;top:1017.22px;font-size:12.5px;color:#595959;">Jiný identifikátor</div>
<svg class="a" style="left:936px;top:1017.5px;" width="9" height="8" viewBox="0 0 9 8"><path d="M1 1 H8 L4.5 6.8 Z" fill="none" stroke="#555" stroke-width="1.1" stroke-linejoin="round"/></svg>
<div class="t" style="left:963.2px;top:1017.22px;font-size:12.5px;color:#595959;">Úřední název</div>
<svg class="a" style="left:1236.5px;top:1017.5px;" width="9" height="8" viewBox="0 0 9 8"><path d="M1 1 H8 L4.5 6.8 Z" fill="none" stroke="#555" stroke-width="1.1" stroke-linejoin="round"/></svg>
<div class="t" style="left:1263px;top:1017.22px;font-size:12.5px;color:#595959;">Obec</div>
<svg class="a" style="left:1456.5px;top:1017.5px;" width="9" height="8" viewBox="0 0 9 8"><path d="M1 1 H8 L4.5 6.8 Z" fill="none" stroke="#555" stroke-width="1.1" stroke-linejoin="round"/></svg>
<div class="t" style="left:1483.8px;top:1017.22px;font-size:12.5px;color:#595959;">Kód NUTS</div>
<div class="a" style="left:344.3px;top:966.2px;width:66.5px;height:40.5px;border:1.5px solid #e31b23;box-sizing:border-box;"></div>
<svg class="a" style="left:982px;top:1066px;" width="28" height="14" viewBox="0 0 28 14"><path d="M3.5 2.8 H8.5 C10.5 5.8 16.5 5.8 18.5 2.8 H23.5 C24.5 2.8 25.2 3.5 25.2 4.5 V10 C25.2 11 24.5 11.7 23.5 11.7 H3.5 C2.5 11.7 1.8 11 1.8 10 V4.5 C1.8 3.5 2.5 2.8 3.5 2.8 Z" fill="none" stroke="#555" stroke-width="1.9" stroke-linejoin="round"/></svg>
<div class="t" style="left:835px;top:1091.00px;font-size:13px;color:#555;">Žádné záznamy. V tomto seznamu nemáme co zobrazit.</div>
</body></html>
